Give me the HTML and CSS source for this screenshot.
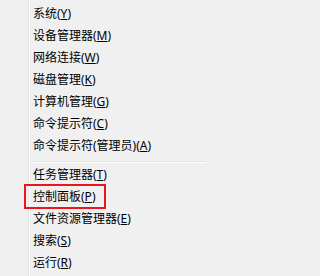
FILE: index.html
```html
<!DOCTYPE html>
<html lang="zh-CN">
<head>
<meta charset="utf-8">
<title>菜单</title>
<link rel="stylesheet" href="styles.css">
</head>
<body>
<div class="menu">
  <ul class="items">
    <li class="item">系统(<u>Y</u>)</li>
    <li class="item">设备管理器(<u>M</u>)</li>
    <li class="item">网络连接(<u>W</u>)</li>
    <li class="item">磁盘管理(<u>K</u>)</li>
    <li class="item">计算机管理(<u>G</u>)</li>
    <li class="item">命令提示符(<u>C</u>)</li>
    <li class="item">命令提示符(管理员)(<u>A</u>)</li>
    <li class="sep"></li>
    <li class="item">任务管理器(<u>T</u>)</li>
    <li class="item marked">控制面板(<u>P</u>)</li>
    <li class="item">文件资源管理器(<u>E</u>)</li>
    <li class="item">搜索(<u>S</u>)</li>
    <li class="item">运行(<u>R</u>)</li>
  </ul>
</div>
</body>
</html>
```

FILE: styles.css
```css
html, body {
  margin: 0;
  padding: 0;
  background: #f0f0f0;
}
body {
  width: 205px;
  height: 276px;
  overflow: hidden;
  font-family: "Noto Sans", "Noto Sans CJK SC", sans-serif;
  font-size: 12px;
  color: #000;
}
.menu {
  padding-left: 28px;
  height: 276px;
  box-sizing: border-box;
}
.items {
  list-style: none;
  margin: 0;
  padding: 3px 0 0 0;
  height: 100%;
  box-sizing: border-box;
  border-left: 1px solid #e2e3e3;
  box-shadow: inset 1px 0 0 #ffffff;
}
.item {
  position: relative;
  height: 22px;
  line-height: 22px;
  padding-left: 4px;
  white-space: nowrap;
}
.item u {
  text-decoration: underline;
  text-underline-offset: 1px;
}
.sep {
  height: 1px;
  margin: 4px 0 1px 1px;
  border-top: 1px solid #e2e3e3;
  background: #ffffff;
}
.marked::after {
  content: "";
  position: absolute;
  left: -5px;
  top: -2px;
  width: 82px;
  height: 25px;
  box-sizing: border-box;
  border: 2px solid #e8171e;
}
```
